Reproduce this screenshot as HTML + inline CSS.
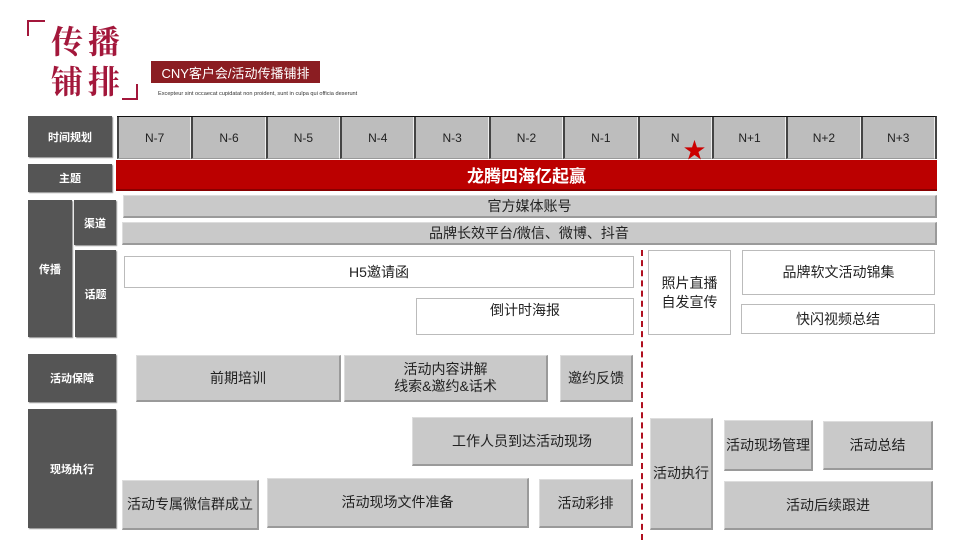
<!DOCTYPE html>
<html><head><meta charset="utf-8"><style>
*{margin:0;padding:0;box-sizing:border-box}
body{width:960px;height:540px;background:#fff;position:relative;overflow:hidden;font-family:"Liberation Sans","Noto Sans CJK SC",sans-serif}
.a{position:absolute;display:flex;align-items:center;justify-content:center;text-align:center}
.lab{background:#555;color:#fff;font-weight:bold;font-size:11px;box-shadow:1px 1px 1px #888}
.g{background:#c9c9c9;color:#222;font-size:14px;border-top:1px solid #ddd;border-left:1px solid #ddd;border-right:2px solid #9a9a9a;border-bottom:2px solid #9a9a9a;line-height:17px}
.w{background:#fff;border:1px solid #bbb;color:#222;font-size:14px;line-height:19px}
.h{background:#bdbdbd;color:#222;font-size:12px;border-left:2px solid #444;border-right:1px solid #eee;border-bottom:1px solid #999}
</style></head><body>
<div style="position:absolute;left:27px;top:20px;width:18px;height:16px;border-left:2px solid #a3173b;border-top:2px solid #a3173b"></div>
<div style="position:absolute;left:122px;top:84px;width:16px;height:16px;border-right:2px solid #a3173b;border-bottom:2px solid #a3173b"></div>
<div style="position:absolute;left:51px;top:20px;font-family:'Noto Serif CJK SC',serif;font-size:32px;color:#a3173b;font-weight:bold;letter-spacing:5px;line-height:40px">传播<br>铺排</div>
<div class="a" style="left:151px;top:61px;width:169px;height:22px;background:#8b1d22;color:#fff;font-size:13px">CNY客户会/活动传播铺排</div>
<div style="position:absolute;left:158px;top:91px;font-size:5.6px;color:#333;white-space:nowrap">Excepteur sint occaecat cupidatat non proident, sunt in culpa qui officia deserunt</div>

<div class="a lab" style="left:28px;top:116px;width:84px;height:41px">时间规划</div>
<div style="position:absolute;left:117px;top:116px;width:820px;height:43px;border-top:1px solid #111;border-right:2px solid #444;display:flex">
<div class="a h" style="position:relative;flex:1">N-7</div><div class="a h" style="position:relative;flex:1">N-6</div><div class="a h" style="position:relative;flex:1">N-5</div><div class="a h" style="position:relative;flex:1">N-4</div><div class="a h" style="position:relative;flex:1">N-3</div><div class="a h" style="position:relative;flex:1">N-2</div><div class="a h" style="position:relative;flex:1">N-1</div><div class="a h" style="position:relative;flex:1">N<span style="position:absolute;left:44px;top:16px;color:#c00;font-size:22px">★</span></div><div class="a h" style="position:relative;flex:1">N+1</div><div class="a h" style="position:relative;flex:1">N+2</div><div class="a h" style="position:relative;flex:1">N+3</div>
</div>

<div class="a lab" style="left:28px;top:164px;width:84px;height:28px">主题</div>
<div class="a" style="left:116px;top:160px;width:821px;height:31px;background:#bb0000;color:#fff;font-weight:bold;font-size:17px;border-bottom:2px solid #800">龙腾四海亿起赢</div>

<div class="a lab" style="left:28px;top:200px;width:44px;height:137px">传播</div>
<div class="a lab" style="left:74px;top:200px;width:42px;height:45px">渠道</div>
<div class="a lab" style="left:75px;top:250px;width:41px;height:87px">话题</div>
<div class="a g" style="left:123px;top:195px;width:814px;height:23px">官方媒体账号</div>
<div class="a g" style="left:122px;top:222px;width:815px;height:23px">品牌长效平台/微信、微博、抖音</div>
<div class="a w" style="left:124px;top:256px;width:510px;height:32px">H5邀请函</div>
<div class="a w" style="left:416px;top:298px;width:218px;height:37px;align-items:flex-start;padding-top:2px">倒计时海报</div>
<div style="position:absolute;left:641px;top:250px;height:290px;border-left:2px dashed #b01020"></div>
<div class="a w" style="left:648px;top:250px;width:83px;height:85px">照片直播<br>自发宣传</div>
<div class="a w" style="left:742px;top:250px;width:193px;height:45px">品牌软文活动锦集</div>
<div class="a w" style="left:741px;top:304px;width:194px;height:30px">快闪视频总结</div>

<div class="a lab" style="left:28px;top:354px;width:88px;height:48px">活动保障</div>
<div class="a g" style="left:136px;top:355px;width:205px;height:47px">前期培训</div>
<div class="a g" style="left:344px;top:355px;width:204px;height:47px">活动内容讲解<br>线索&amp;邀约&amp;话术</div>
<div class="a g" style="left:560px;top:355px;width:73px;height:47px">邀约反馈</div>

<div class="a lab" style="left:28px;top:409px;width:88px;height:119px">现场执行</div>
<div class="a g" style="left:412px;top:417px;width:221px;height:49px">工作人员到达活动现场</div>
<div class="a g" style="left:122px;top:480px;width:137px;height:50px">活动专属微信群成立</div>
<div class="a g" style="left:267px;top:478px;width:262px;height:50px">活动现场文件准备</div>
<div class="a g" style="left:539px;top:479px;width:94px;height:49px">活动彩排</div>
<div class="a g" style="left:650px;top:418px;width:63px;height:112px">活动执行</div>
<div class="a g" style="left:724px;top:420px;width:89px;height:51px">活动现场管理</div>
<div class="a g" style="left:823px;top:421px;width:110px;height:49px">活动总结</div>
<div class="a g" style="left:724px;top:481px;width:209px;height:49px">活动后续跟进</div>
</body></html>
